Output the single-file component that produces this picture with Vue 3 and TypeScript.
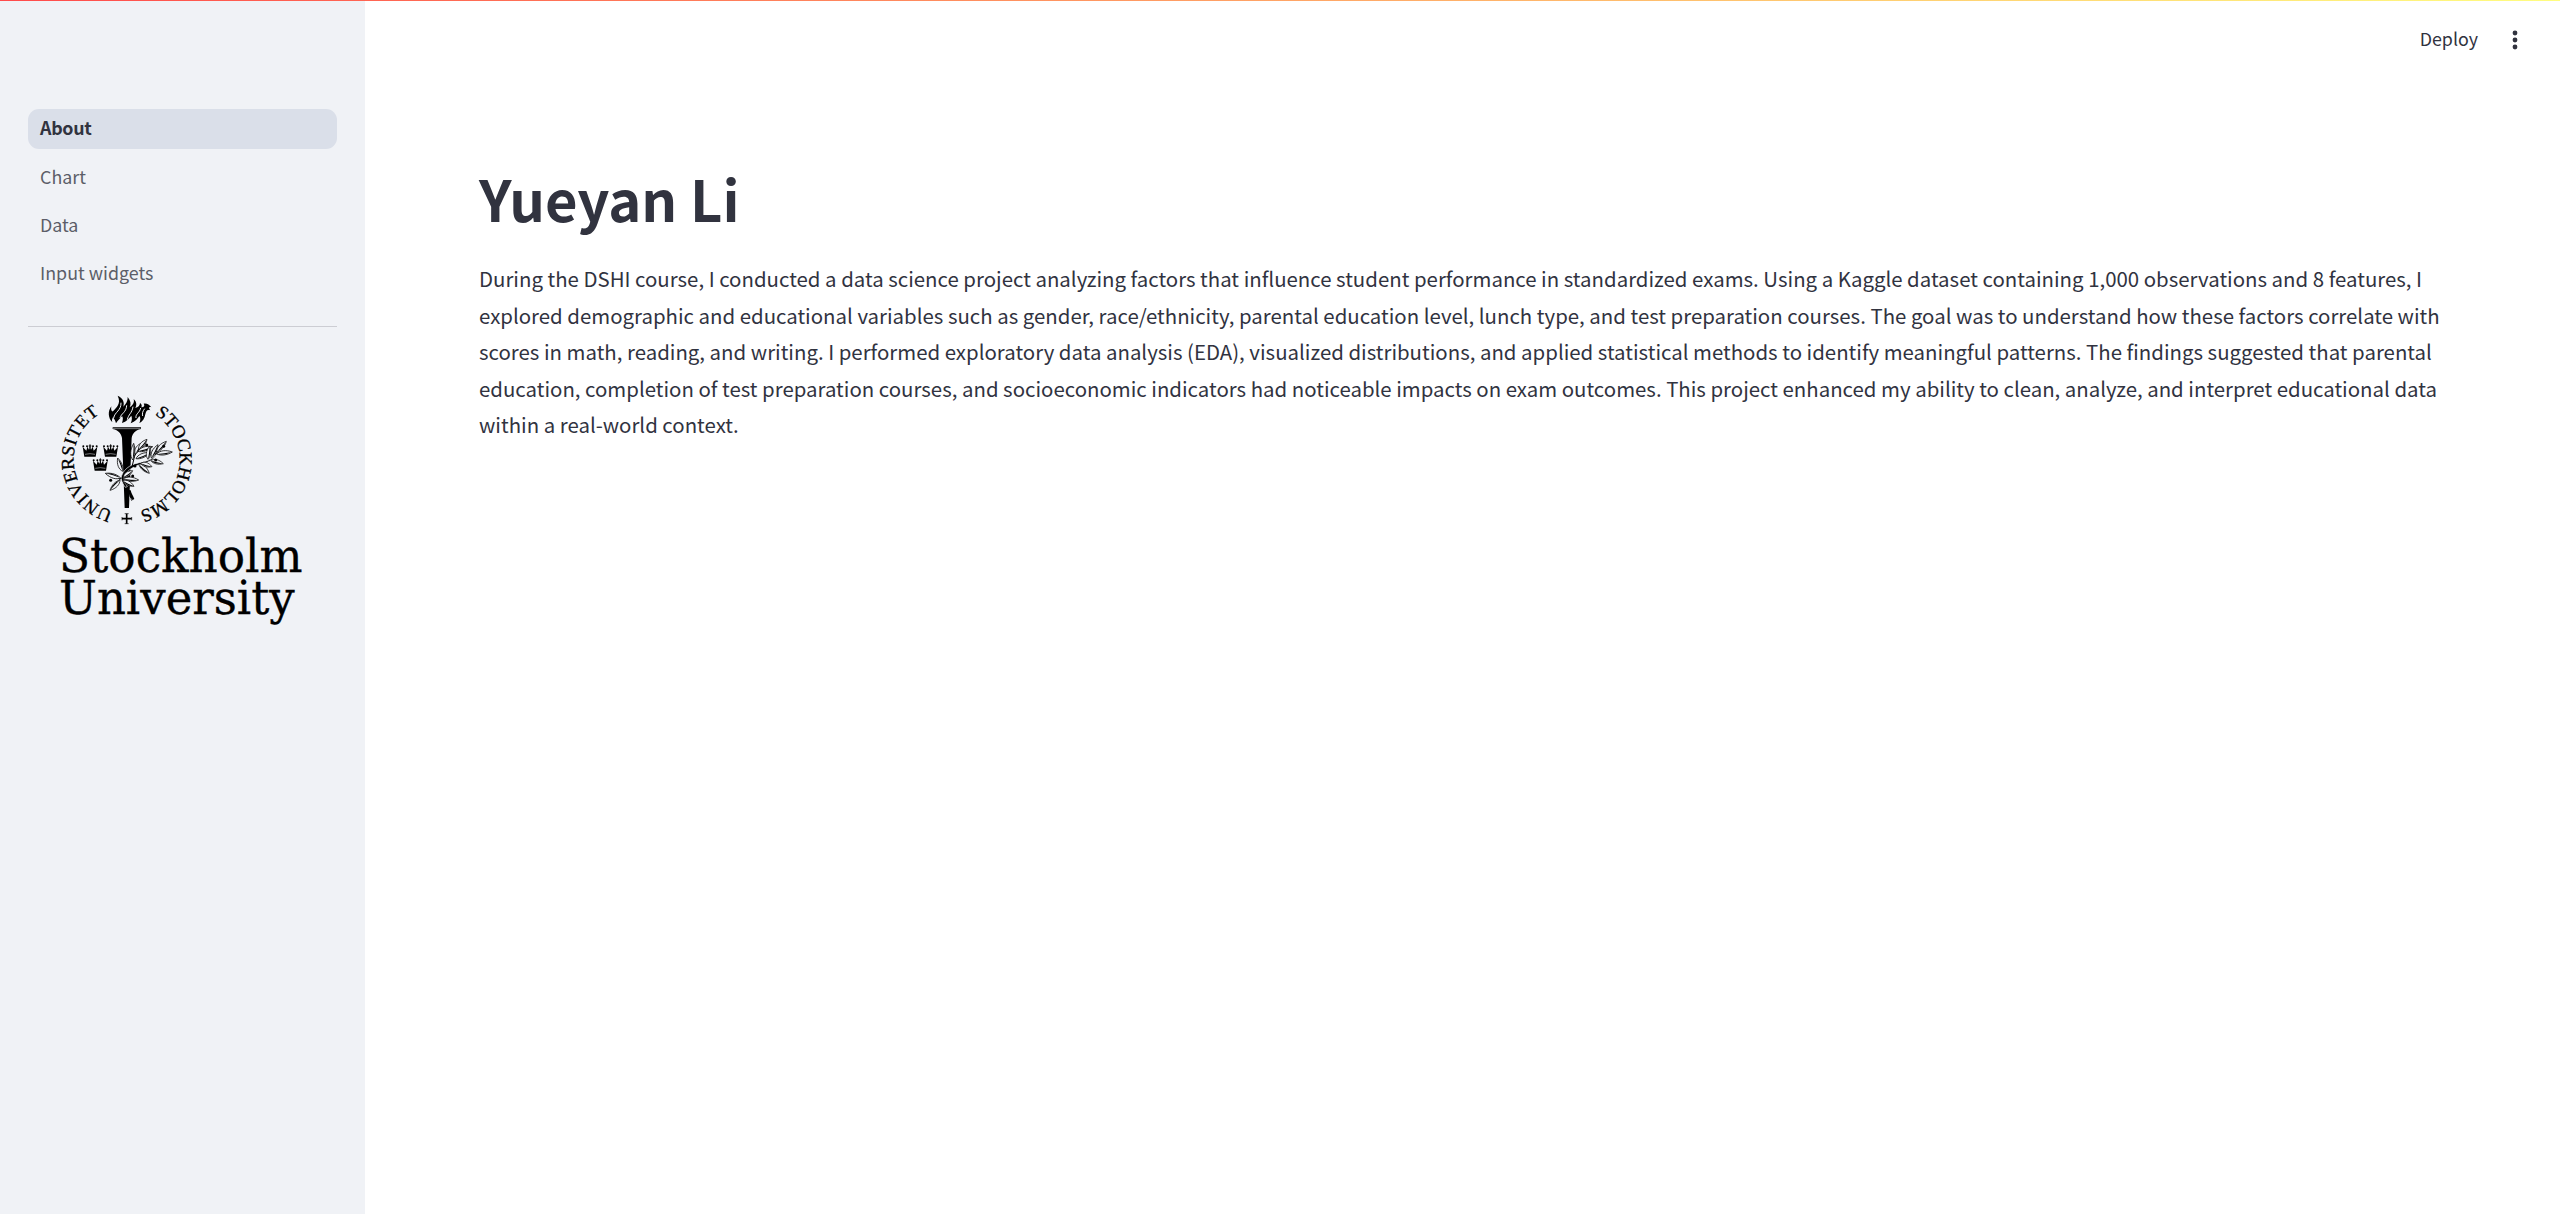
<script setup lang="ts">
type Leaf = [number, number, number, number]

const pages: string[] = ['About', 'Chart', 'Data', 'Input widgets']
const current = 'About'

const lines: string[] = [
  'During the DSHI course, I conducted a data science project analyzing factors that influence student performance in standardized exams. Using a Kaggle dataset containing 1,000 observations and 8 features, I',
  'explored demographic and educational variables such as gender, race/ethnicity, parental education level, lunch type, and test preparation courses. The goal was to understand how these factors correlate with',
  'scores in math, reading, and writing. I performed exploratory data analysis (EDA), visualized distributions, and applied statistical methods to identify meaningful patterns. The findings suggested that parental',
  'education, completion of test preparation courses, and socioeconomic indicators had noticeable impacts on exam outcomes. This project enhanced my ability to clean, analyze, and interpret educational data',
  'within a real-world context.',
]

const crowns: [number, number][] = [[150, 212], [212, 212], [181, 254]]

// Olive leaves: base x, base y, tip x, tip y
const leaves: Leaf[] = [
  [278, 240, 281, 190], [286, 222, 302, 190], [296, 208, 321, 178], [294, 214, 338, 200], [288, 236, 330, 218],
  [324, 238, 329, 198], [334, 234, 354, 194], [350, 216, 379, 184], [350, 222, 397, 216], [332, 242, 370, 251],
  [296, 252, 328, 280], [302, 250, 336, 260],
  [248, 274, 233, 234], [242, 294, 196, 280], [240, 300, 210, 331], [250, 292, 278, 272],
  [250, 297, 296, 300], [248, 302, 282, 319],
]
const glyph = ([x, y, u, v]: Leaf) => {
  const a = (Math.atan2(v - y, u - x) * 180) / Math.PI
  return `translate(${x} ${y}) rotate(${a}) scale(${Math.hypot(u - x, v - y) / 40} 1)`
}
const berries: [number, number][] = [[320, 195], [285, 258], [212, 301], [347, 240], [371, 199], [278, 288]]
</script>

<template>
  <div class="app">
    <div class="stripe"></div>
    <div class="body">
      <aside class="sidebar">
        <nav class="nav">
          <a v-for="p in pages" :key="p" class="link" :class="{ active: p === current }">{{ p }}</a>
        </nav>
        <div class="divider"></div>
        <svg class="logo" viewBox="0 0 840 780" width="280" height="260">
          <defs>
            <path id="ringRight" d="M260 80 A159 159 0 0 1 260 398" />
            <path id="ringLeft" d="M260 398 A159 159 0 0 1 260 80" />
          </defs>
          <g class="ring">
            <text><textPath href="#ringRight" startOffset="88" textLength="372">STOCKHOLMS</textPath></text>
            <text><textPath href="#ringLeft" startOffset="42" textLength="372">UNIVERSITET</textPath></text>
          </g>
          <path d="M260 401V431M246 416H275" stroke="#000" stroke-width="5" />
          <path d="M254 401h12M254 431h12M246 411v10M275 411v10" stroke="#000" stroke-width="2" />
          <!-- flame -->
          <path d="M217 127C204 114 203 94 214 79C212 90 215 95 219 94C228 82 245 72 233 47C250 54 254 68 250 80C257 72 263 66 263 51C272 62 274 72 269 82C278 76 284 68 281 57C291 66 290 76 286 84C294 82 300 77 300 69C304 72 307 76 304 82C312 82 315 76 311 71C320 69 328 74 334 82C326 79 325 84 331 91C321 87 318 94 316 103C314 115 309 123 298 130C302 120 302 112 298 108C293 116 286 124 272 130C277 119 276 112 274 107C266 116 260 124 246 129C250 118 249 112 246 108C240 116 232 122 228 130C225 120 222 116 219 112C216 117 215 121 217 127Z" />
          <path d="M221 114C224 96 244 92 243 68M240 114C243 100 259 98 260 76M262 119C265 103 276 100 279 80M288 114C286 101 299 99 302 84M308 108C306 100 308 94 314 86" class="gap" />
          <!-- torch -->
          <path d="M218 142H303V147C285 151 278 160 275 174L272 250L267 384H254L249 250L246 174C243 160 236 151 218 147Z" />
          <path d="M219 146H302" stroke="#f0f2f6" stroke-width="1.5" />
          <!-- crowns -->
          <g v-for="([x, y], i) in crowns" :key="'c' + i" :transform="`translate(${x} ${y})`">
            <path d="M-17 18L-22 -12L-16 -5L-11 0L-8 -12L-3 -3L0 -14L3 -3L8 -12L11 0L16 -5L22 -12L17 18Z" />
            <path d="M0 -19V-8M-4 -14H4" stroke="#000" stroke-width="3" />
            <path d="M-15 11Q0 7 15 11" fill="none" stroke="#f0f2f6" stroke-width="1.5" />
            <circle cx="-20" cy="-13" r="3" /><circle cx="20" cy="-13" r="3" />
            <circle cx="-9" cy="-13" r="3" /><circle cx="9" cy="-13" r="3" />
          </g>
          <!-- olive branch -->
          <path d="M350 222C336 240 318 244 298 248C268 254 248 270 243 294C246 306 250 314 256 322L262 320C255 310 251 300 252 290C256 276 276 262 300 253C320 248 340 244 350 222Z" stroke="#f0f2f6" stroke-width="2" />
          <path d="M266 330C266 342 269 352 274 362L283 357C279 347 274 340 272 331Z" />
          <path d="M269 352C271 356 272 358 277 358" stroke="#f0f2f6" stroke-width="2" fill="none" />
          <path d="M306 196C296 208 284 222 282 236L276 260M372 190L345 226M202 283L242 296M214 324L244 294" class="twig" />
          <g v-for="(f, i) in leaves" :key="'l' + i" :transform="glyph(f)">
            <path d="M0 0C9 -9 24 -10 40 0C25 8 10 7 0 0Z" class="leaf" />
            <path d="M2 0C14 1 26 1 38 0C25 6 10 5 2 0Z" class="vein" />
          </g>
          <circle v-for="([x, y], i) in berries" :key="'b' + i" :cx="x" :cy="y" r="4.5" />
          <g class="word">
            <text x="57" y="575" textLength="731" lengthAdjust="spacingAndGlyphs">Stockholm</text>
            <text x="57" y="701" textLength="707" lengthAdjust="spacingAndGlyphs">University</text>
          </g>
        </svg>
      </aside>
      <main class="main">
        <header class="toolbar">
          <span>Deploy</span>
          <svg width="6" height="20" viewBox="0 0 6 20"><circle cx="3" cy="3" r="2.4" /><circle cx="3" cy="10" r="2.4" /><circle cx="3" cy="17" r="2.4" /></svg>
        </header>
        <section class="content">
          <h1>Yueyan Li</h1>
          <p><span v-for="l in lines" :key="l" class="line">{{ l }}</span></p>
        </section>
      </main>
    </div>
  </div>
</template>

<style>
body { background: #fff; overflow: hidden; }
</style>
<style scoped>
.app { height: 1214px; width: 2560px; display: flex; flex-direction: column; font-family: "Noto Sans CJK SC", sans-serif; color: #31333f; }
.stripe { height: 1px; background: linear-gradient(90deg, #ff4b4b, #fffd80); }
.body { flex: 1; display: flex; }
.sidebar { width: 365px; background: #f0f2f6; box-sizing: border-box; padding-top: 108px; }
.nav { display: flex; flex-direction: column; gap: 8px; padding: 0 28px; }
.link { box-sizing: border-box; height: 40px; line-height: 37px; padding-left: 12px; border-radius: 11px; font-size: 17.85px; color: #5c5e68; white-space: nowrap; }
.link.active { background: #dadfe9; color: #31333f; font-weight: 700; letter-spacing: -0.3px; margin-bottom: 1px; }
.divider { height: 1px; margin: 32px 28px 0; background: #cccdd3; }
.logo { display: block; margin: 53px 0 0 40px; }
.ring { font-family: "Liberation Serif", serif; font-size: 55px; }
.ring text { stroke: #000; stroke-width: 1; }
.word { font-family: "DejaVu Serif", serif; font-size: 142px; stroke: #000; stroke-width: 1; }
.leaf { fill: #f0f2f6; stroke: #000; stroke-width: 2; }
.vein { fill: #000; }
.twig { fill: none; stroke: #000; stroke-width: 3; }
.gap { fill: none; stroke: #f0f2f6; stroke-width: 3; }
.main { flex: 1; }
.toolbar { height: 78px; display: flex; justify-content: flex-end; align-items: center; gap: 34px; padding-right: 42px; font-size: 17.85px; }
.toolbar span { padding-bottom: 4px; }
.toolbar svg { fill: #31333f; }
.content { padding: 77px 114px 0; }
h1 { margin: 0; font-size: 56.1px; line-height: 84px; font-weight: 700; white-space: nowrap; }
p { margin: 20px 0 0; font-size: 20.42px; line-height: 36.5px; }
.line { display: block; white-space: nowrap; }
</style>
